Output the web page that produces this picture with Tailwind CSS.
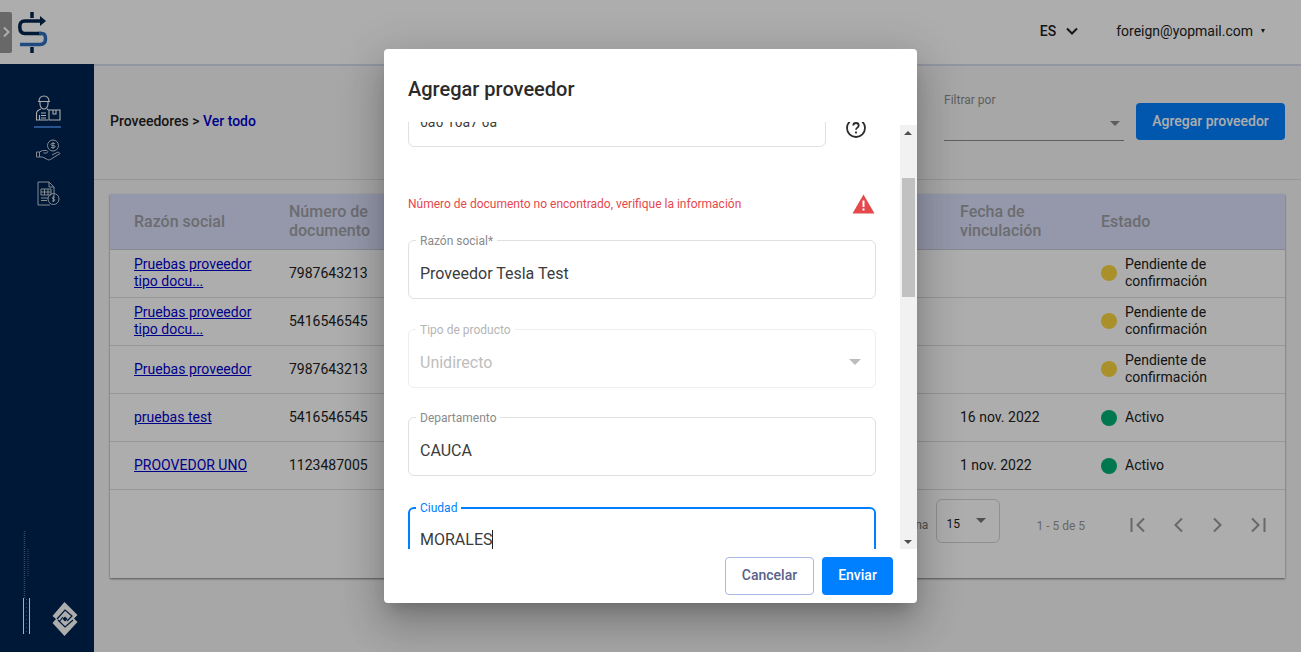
<!DOCTYPE html>
<html lang="es">
<head>
<meta charset="utf-8">
<title>Agregar proveedor</title>
<script src="https://cdn.jsdelivr.net/npm/@tailwindcss/browser@4"></script>
</head>
<body class="font-['Roboto',sans-serif]">
<div class="relative w-[1301px] h-[652px] overflow-hidden bg-[#f7f7f8] flex flex-col text-[#212121]">

  <!-- top bar -->
  <header class="h-[64px] shrink-0 bg-white flex items-center">
    <div class="w-[12px] h-[41px] bg-[#9a9a9a] rounded-r-[2px] flex items-center justify-center">
      <svg width="8" height="12" viewBox="0 0 8 12" fill="none" stroke="#ffffff" stroke-width="2"><path d="M2 1.500 6.500 6 2 10.500"/></svg>
    </div>
    <svg class="ml-[6px]" width="30" height="41" viewBox="0 0 30 41" fill="none">
      <path d="M14 0v6M14 35v6" stroke="#00264f" stroke-width="3.500"/>
      <path d="M24 9H7C3 9 1.800 11 1.800 15S3 21.500 7 21.500H23" stroke="#00264f" stroke-width="3.500"/>
      <path d="M22 4 28 9l-6 5z" fill="#00264f"/>
      <path d="M21 21.500H24C27 21.500 27.500 24 27.500 27S26 32.500 22 32.500H2" stroke="#2f6fc0" stroke-width="3.500"/>
    </svg>
    <div class="ml-auto flex items-center mt-[-2px]">
      <span class="text-sm font-medium">ES</span>
      <svg class="ml-[10px]" width="12" height="8" viewBox="0 0 12 8" fill="none" stroke="#212121" stroke-width="2"><path d="M1 1.500 6 6.500l5-5"/></svg>
      <span class="ml-[38px] text-sm">foreign@yopmail.com</span>
      <span class="ml-[8px] mr-[36px] w-0 h-0 border-x-[2.500px] border-x-transparent border-t-[4px] border-t-[#212121]"></span>
    </div>
  </header>

  <div class="flex flex-1 min-h-0">
    <!-- sidebar -->
    <aside class="w-[94px] shrink-0 bg-[#002452] flex flex-col relative">
      <div class="pt-[31px] pl-[34px] flex flex-col">
        <svg width="27" height="26" viewBox="0 0 27 26" fill="none" stroke="#ffffff" stroke-width="1.100">
          <path d="M5 6.500C5 3 7 1 10 1s5 2 5 5.500M4 6.500h12M6 7v2c0 3 2 5 4 5s4-2 4-5V7"/>
          <path d="M7 14C4 15 2.500 16 2.500 18.500V25H14M13 14l1.500 1M7 18h5M7 20.500h5M7 23h5M5.500 20v5"/>
          <path d="M15 15h11v10H15zM19 15v4h3v-4"/>
        </svg>
        <div class="w-[27px] h-[2px] bg-[#3f79d6] mt-[5px]"></div>
      </div>
      <div class="pl-[36px] mt-[11px]">
        <svg width="25" height="22" viewBox="0 0 25 22" fill="none" stroke="#c7ccd6" stroke-width="1">
          <circle cx="17" cy="6.500" r="5.500"/>
          <path d="M17 3v7M19 4.500h-3c-1.500 0-1.500 2 0 2h2c1.500 0 1.500 2 0 2h-3"/>
          <path d="M0.500 13h3l3-1.500h4c1.500 0 2 2 0 2.500h-3M3.500 18h3l5 2.500c1 .5 2 .5 3 0l9.500-6c-1-1.500-2-1.500-3-1l-5 2.500"/>
          <path d="M0.500 13v5h3v-5"/>
        </svg>
      </div>
      <div class="pl-[37px] mt-[20px]">
        <svg width="23" height="25" viewBox="0 0 23 25" fill="none" stroke="#c7ccd6" stroke-width="1">
          <path d="M13 24H1V1h11l5 5v9M12 1v5h5"/>
          <path d="M4 8h10v6H4zM4 11h10M7.500 8v6M11 8v6M4 17h7M4 19.500h6"/>
          <circle cx="16.500" cy="18" r="5.500"/>
          <path d="M16.500 15v6M18 16h-2c-1 0-1 2 0 2h1c1 0 1 2 0 2h-2"/>
        </svg>
      </div>
      <div class="mt-auto pl-[22px] pb-[16px] flex items-end">
        <svg width="8" height="105" viewBox="0 0 8 105" fill="none">
          <path d="M2.500 0V67" stroke="#56698a" stroke-width="1.500" stroke-dasharray="1 1"/>
          <path d="M6 18V46" stroke="#56698a" stroke-width="1" stroke-dasharray="1 1"/>
          <path d="M1.500 67V103M7.500 67V103" stroke="#ffffff" stroke-width="1"/>
          <path d="M4.500 68V102" stroke="#56698a" stroke-width="1" stroke-dasharray="1 3"/>
        </svg>
        <svg class="ml-[22px]" width="26" height="34" viewBox="0 0 26 34" fill="none">
          <path d="M12.500 0 25.500 13 22 16.500 25.500 20 12.500 34 0.500 21 4 17 0.500 14z" fill="#ffffff"/>
          <path d="M5 17 13 8 20 14 15 19M6 18 13 25 21 18M7 20 11 15" stroke="#002452" stroke-width="1.200"/>
          <path d="M13 14.500 15.500 17 13 19.500 10.500 17z" fill="#002452"/>
        </svg>
      </div>
    </aside>

    <!-- main -->
    <main class="flex-1 min-w-0 flex flex-col border-t-2 border-[#d8deef]">
      <div class="h-[114px] shrink-0 border-b border-[#dddddd] flex items-start justify-between pl-[16px] pr-[16px]">
        <p class="text-sm font-medium mt-[45px]">Proveedores &gt; <span class="text-[#0000cc]">Ver todo</span></p>
        <div class="flex items-start gap-[12px] mt-[27px]">
          <div class="w-[180px] h-[48px] relative border-b border-[#8c8c8c]">
            <span class="block text-xs text-[#8d8d8d] leading-[14px]">Filtrar por</span>
            <span class="absolute right-[4px] top-[28px] w-0 h-0 border-x-[5px] border-x-transparent border-t-[5px] border-t-[#8a8a8a]"></span>
          </div>
          <button class="w-[149px] h-[37px] mt-[10px] pb-[2px] rounded-[4px] bg-[#0080ff] text-white text-sm font-medium">Agregar proveedor</button>
        </div>
      </div>

      <section class="mt-[14px] mx-[16px] bg-white shadow-[0_1px_2px_rgba(0,0,0,0.5)] flex flex-col">
        <div class="h-[56px] flex items-center bg-[#dbe1fb] border-b border-[#c9cbd8] font-medium text-[#a0a0a6] leading-[19px]">
          <div class="w-[179px] pl-[24px]">Razón social</div>
          <div class="flex-1 w-0 mb-[2px]">Número de<br>documento</div>
          <div class="w-[141px] mb-[2px]">Fecha de<br>vinculación</div>
          <div class="w-[184px]">Estado</div>
        </div>

        <div class="h-[48px] flex items-center border-b border-[#dddddd] text-sm leading-[17px]">
          <div class="w-[179px] pl-[24px] mb-[2px]"><a class="underline text-[#0000cc]" href="#">Pruebas proveedor<br>tipo docu...</a></div>
          <div class="flex-1 w-0">7987643213</div>
          <div class="w-[141px]"></div>
          <div class="w-[184px] flex items-center gap-[8px] mb-[2px]"><span class="w-[16px] h-[16px] mt-[1px] rounded-full bg-[#fad53f]"></span><span>Pendiente de<br>confirmación</span></div>
        </div>
        <div class="h-[48px] flex items-center border-b border-[#dddddd] text-sm leading-[17px]">
          <div class="w-[179px] pl-[24px] mb-[2px]"><a class="underline text-[#0000cc]" href="#">Pruebas proveedor<br>tipo docu...</a></div>
          <div class="flex-1 w-0">5416546545</div>
          <div class="w-[141px]"></div>
          <div class="w-[184px] flex items-center gap-[8px] mb-[2px]"><span class="w-[16px] h-[16px] mt-[1px] rounded-full bg-[#fad53f]"></span><span>Pendiente de<br>confirmación</span></div>
        </div>
        <div class="h-[48px] flex items-center border-b border-[#dddddd] text-sm leading-[17px]">
          <div class="w-[179px] pl-[24px]"><a class="underline text-[#0000cc]" href="#">Pruebas proveedor</a></div>
          <div class="flex-1 w-0">7987643213</div>
          <div class="w-[141px]"></div>
          <div class="w-[184px] flex items-center gap-[8px] mb-[2px]"><span class="w-[16px] h-[16px] mt-[1px] rounded-full bg-[#fad53f]"></span><span>Pendiente de<br>confirmación</span></div>
        </div>
        <div class="h-[48px] flex items-center border-b border-[#dddddd] text-sm leading-[17px]">
          <div class="w-[179px] pl-[24px]"><a class="underline text-[#0000cc]" href="#">pruebas test</a></div>
          <div class="flex-1 w-0">5416546545</div>
          <div class="w-[141px]">16 nov. 2022</div>
          <div class="w-[184px] flex items-center gap-[8px]"><span class="w-[16px] h-[16px] rounded-full bg-[#00b074]"></span><span>Activo</span></div>
        </div>
        <div class="h-[48px] flex items-center border-b border-[#dddddd] text-sm leading-[17px]">
          <div class="w-[179px] pl-[24px]"><a class="underline text-[#0000cc]" href="#">PROOVEDOR UNO</a></div>
          <div class="flex-1 w-0">1123487005</div>
          <div class="w-[141px]">1 nov. 2022</div>
          <div class="w-[184px] flex items-center gap-[8px]"><span class="w-[16px] h-[16px] rounded-full bg-[#00b074]"></span><span>Activo</span></div>
        </div>

        <div class="h-[88px] flex items-start justify-end pr-[17px]">
          <span class="text-xs text-[#777777] mt-[27px] mr-[8px]">Filas por página</span>
          <div class="w-[64px] h-[44px] mt-[9px] border border-[#d5d5d5] rounded-[6px] flex items-center pl-[9px] pr-[13px] justify-between text-xs">
            <span class="mt-[6px]">15</span>
            <span class="mb-[2px] w-0 h-0 border-x-[5px] border-x-transparent border-t-[5px] border-t-[#777777]"></span>
          </div>
          <span class="ml-[36px] mt-[29px] text-xs leading-[14px] text-[#9a9a9a]">1 - 5 de 5</span>
          <div class="ml-[43px] mt-[25px] flex gap-[20px]">
            <svg width="20" height="20" viewBox="0 0 20 20" fill="none" stroke="#9a9a9a" stroke-width="2"><path d="M3.500 3v14M16 3.500 9.500 10 16 16.500"/></svg>
            <svg width="20" height="20" viewBox="0 0 20 20" fill="none" stroke="#9a9a9a" stroke-width="2"><path d="M14 3.500 7.500 10 14 16.500"/></svg>
            <svg width="20" height="20" viewBox="0 0 20 20" fill="none" stroke="#9a9a9a" stroke-width="2"><path d="M6 3.500 12.500 10 6 16.500"/></svg>
            <svg width="20" height="20" viewBox="0 0 20 20" fill="none" stroke="#9a9a9a" stroke-width="2"><path d="M16.500 3v14M4 3.500 10.500 10 4 16.500"/></svg>
          </div>
        </div>
      </section>
    </main>
  </div>

  <!-- backdrop -->
  <div class="absolute inset-0 bg-black/32"></div>

  <!-- dialog -->
  <div class="absolute left-[384px] top-[49px] w-[533px] h-[554px] bg-white rounded-[4px] flex flex-col shadow-[0_11px_15px_-7px_rgba(0,0,0,0.2),0_24px_38px_3px_rgba(0,0,0,0.14),0_9px_46px_8px_rgba(0,0,0,0.12)]">
    <h2 class="h-[73px] shrink-0 pl-[24px] pt-[27px] text-xl leading-[26px] font-medium text-[#2b2b2b]">Agregar proveedor</h2>

    <div class="relative h-[427px] shrink-0 overflow-hidden pl-[24px]">
      <div class="-mt-[34px] flex flex-col w-[468px]">
        <div class="flex items-start">
          <div class="w-[418px] h-[59px] shrink-0 border border-[#e0e0e0] rounded-[6px] pl-[11px] pt-[22px] text-sm leading-[22px] text-[#3c3c3c]">6a6 10a7 6a</div>
          <svg class="ml-[18px] mt-[28px]" width="24" height="24" viewBox="0 0 24 24" fill="none" stroke="#2b2b2b" stroke-width="1.800"><circle cx="12" cy="12" r="9"/><path d="M9.300 9.500C9.300 8 10.500 7 12 7s2.700 1 2.700 2.500c0 2-2.700 2.200-2.700 4.300"/><path d="M12 15.600v1.800"/></svg>
        </div>
        <div class="h-[93px] flex items-start justify-between pr-[1px]">
          <p class="mt-[50px] text-xs leading-[14px] text-[#e5484d]">Número de documento no encontrado, verifique la información</p>
          <svg class="mt-[47px]" width="23" height="20" viewBox="0 0 23 20"><path d="M11.500 0.500 22.500 19.500H0.500z" fill="#e5484d"/><path d="M10.500 6.500h2v6.500h-2zM10.500 14.500h2v2h-2z" fill="#ffffff"/></svg>
        </div>

        <div class="relative h-[59px] border border-[#e0e0e0] rounded-[6px] pl-[11px] pt-[22px] leading-[22px] text-[#3c3c3c]">
          <span class="absolute left-[7px] -top-[6px] bg-white px-[4px] text-xs leading-[12px] text-[#8a8a8a]">Razón social*</span>
          Proveedor Tesla Test
        </div>

        <div class="relative mt-[30px] h-[59px] border border-[#eeeeee] rounded-[6px] pl-[11px] pt-[22px] leading-[22px] text-[#bdbdbd] flex justify-between">
          <span class="absolute left-[7px] -top-[6px] bg-white px-[4px] text-xs leading-[12px] text-[#b5b5b5]">Tipo de producto</span>
          <span>Unidirecto</span>
          <span class="mr-[14px] mt-[7px] w-0 h-0 border-x-[6px] border-x-transparent border-t-[6px] border-t-[#bdbdbd]"></span>
        </div>

        <div class="relative mt-[29px] h-[59px] border border-[#e0e0e0] rounded-[6px] pl-[11px] pt-[22px] leading-[22px] text-[#3c3c3c]">
          <span class="absolute left-[7px] -top-[6px] bg-white px-[4px] text-xs leading-[12px] text-[#8a8a8a]">Departamento</span>
          CAUCA
        </div>

        <div class="relative mt-[31px] h-[59px] border-2 border-[#007fff] rounded-[6px] pl-[10px] pt-[20px] leading-[22px] text-[#3c3c3c] flex">
          <span class="absolute left-[6px] -top-[8px] bg-white px-[4px] text-xs leading-[14px] text-[#007fff]">Ciudad</span>
          <span>MORALES</span><span class="w-px h-[20px] bg-[#222222] mt-[1px]"></span>
        </div>
      </div>

      <!-- scrollbar -->
      <div class="absolute right-0 top-[3px] bottom-0 w-[17px] bg-[#f1f1f1]">
        <span class="absolute left-[4px] top-[6px] w-0 h-0 border-x-[4px] border-x-transparent border-b-[4px] border-b-[#505050]"></span>
        <div class="absolute left-[2px] top-[53px] w-[13px] h-[119px] bg-[#c1c1c1]"></div>
        <span class="absolute left-[4px] bottom-[5px] w-0 h-0 border-x-[4px] border-x-transparent border-t-[4px] border-t-[#505050]"></span>
      </div>
    </div>

    <div class="h-[54px] shrink-0 flex items-start justify-end gap-[8px] pt-[8px] pr-[24px]">
      <button class="w-[89px] h-[38px] pb-[2px] rounded-[4px] border border-[#a9b7e4] bg-white text-sm font-medium text-[#58628a]">Cancelar</button>
      <button class="w-[71px] h-[38px] pb-[2px] rounded-[4px] bg-[#007fff] text-white text-sm font-medium">Enviar</button>
    </div>
  </div>
</div>
</body>
</html>
